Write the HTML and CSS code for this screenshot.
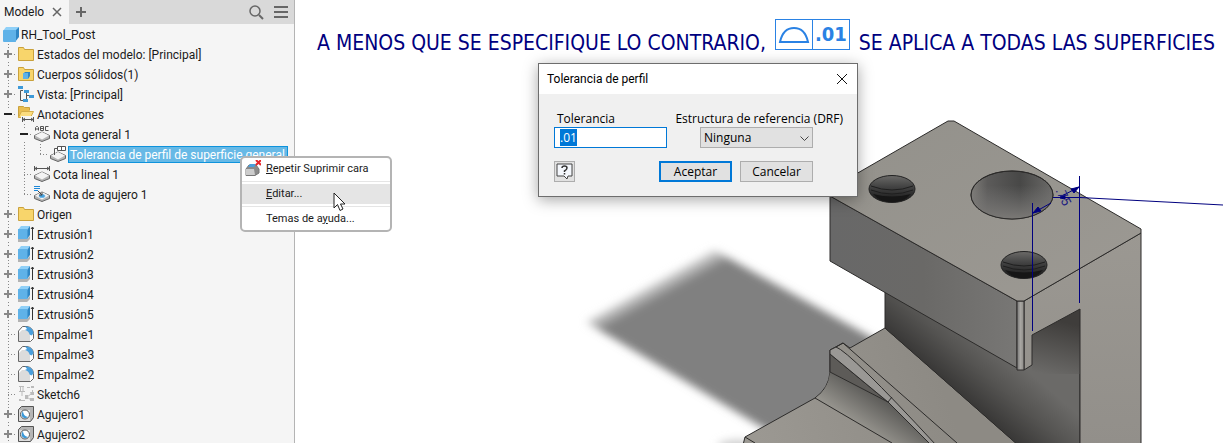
FILE: index.html
```html
<!DOCTYPE html>
<html lang="es">
<head>
    <meta charset="utf-8">
    <title>RH_Tool_Post</title>
    <link rel="stylesheet" href="styles.css">
</head>
<body>
    <!-- shared icons -->
    <svg class="sprite" aria-hidden="true">
        <symbol id="i-cube" viewBox="0 0 16 16">
            <path d="M0 5 3 1h13l-3 4z" fill="#8fd0f8"/>
            <path d="M12 5l4-4v10l-4 5z" fill="#2f86c4"/>
            <rect x="0" y="4" width="13" height="12" rx="1" fill="#5fb2e8"/>
        </symbol>
        <symbol id="i-folder" viewBox="0 0 16 16">
            <path d="M.5 1.500h5l1 2h9v11H.5z" fill="#f8d56b" stroke="#c9a13c"/>
        </symbol>
        <symbol id="i-bodies" viewBox="0 0 16 16">
            <path d="M.5 1.500h5l1 2h9v11H.5z" fill="#f8d56b" stroke="#c9a13c"/>
            <path d="M5 8l2-2h5v4l-2 3H5z" fill="#2f86c4"/>
            <rect x="5" y="7" width="5" height="6" fill="#5fb2e8"/>
        </symbol>
        <symbol id="i-view" viewBox="0 0 16 16">
            <path d="M5 4.500H2.500v10H5M8.500 7v6.500M8.500 9.500H11" fill="none" stroke="#555"/>
            <path d="M0 0h5v3H0zM6 4h5v3H6zM11 9h5v3h-5zM5 13h5v3H5z" fill="#3e9ad8"/>
        </symbol>
        <symbol id="i-annot" viewBox="0 0 16 16">
            <path d="M.5 11.500v-11h5l1 1h5v3" fill="#e9bd4f" stroke="#c9a13c"/>
            <path d="M.5 11.500l3-6h12l-3 6z" fill="#fbdc7e" stroke="#d5ae49"/>
            <path d="M3 10h13v6H3z" fill="#f5f5f5"/>
            <path d="M4.500 11v5M15.500 11v5M5 13.500h10M7 12l-2 1.500L7 15M13 12l2 1.500L13 15" fill="none" stroke="#555"/>
        </symbol>
        <symbol id="i-note" viewBox="0 0 16 16">
            <path d="M.5 9.500 8 6l7.500 3.500v3L8 15.500.5 12.500z" fill="#b5b5b5" stroke="#666"/>
            <path d="M1 9.500 8 6l7 3.500-7 4z" fill="#f4f4f4"/>
            <path d="M1.500 4.500v-3l1-1h1l1 1v3M1.500 3h3M6.500.500v4M6.500.500h3v4h-3M6.500 2.500h3M14.500.500h-3v4h3" fill="none" stroke="#555"/>
        </symbol>
        <symbol id="i-profile" viewBox="0 0 16 16">
            <path d="M.5 9.500 8 6l7.500 3.500v3L8 15.500.5 12.500z" fill="#b5b5b5" stroke="#666"/>
            <path d="M1 9.500 8 6l7 3.500-7 4z" fill="#f4f4f4"/>
            <path d="M7.500.500h8v4h-8zM11.500.500v4M7 2.500H4.500V9" fill="#fff" stroke="#555"/>
        </symbol>
        <symbol id="i-linear" viewBox="0 0 16 16">
            <path d="M.5 9.500 8 6l7.500 3.500v3L8 15.500.5 12.500z" fill="#b5b5b5" stroke="#666"/>
            <path d="M1 9.500 8 6l7 3.500-7 4z" fill="#f4f4f4"/>
            <path d="M.5 0v5M15.500 0v5M1 2.500h14M3 1 1 2.500 3 4M13 1l2 1.500L13 4" fill="none" stroke="#555"/>
        </symbol>
        <symbol id="i-holenote" viewBox="0 0 16 16">
            <path d="M.5 9.500 8 6l7.500 3.500v3L8 15.500.5 12.500z" fill="#b5b5b5" stroke="#666"/>
            <path d="M1 9.500 8 6l7 3.500-7 4z" fill="#f4f4f4"/>
            <ellipse cx="8" cy="10" rx="3" ry="1.500" fill="#3e9ad8" stroke="#6fb7e8"/>
            <path d="M0 .500h6M0 2.500h6M0 4.500h4" stroke="#1e88d8"/>
            <path d="M4 5l4 4M8 6v3H5" fill="none" stroke="#444"/>
        </symbol>
        <symbol id="i-extrude" viewBox="0 0 16 16">
            <path d="M0 13h9l3-3v3l-3 3H0z" fill="#b3b3b3"/>
            <path d="M0 4l3-4h9L9 4z" fill="#8fd0f8"/>
            <path d="M9 4l3-4v9l-3 4z" fill="#2f86c4"/>
            <path d="M0 3h9.500v10H0z" fill="#5fb2e8"/>
            <path d="M14.500 1v13M13 3l1.500-2L16 3" fill="none" stroke="#333"/>
        </symbol>
        <symbol id="i-fillet" viewBox="0 0 16 16">
            <path d="M.5 15.500V5l4-4.500H9q6 1 6.500 7v5l-3 3z" fill="#fff" stroke="#666"/>
            <path d="M1 15V7l3-3h3q5 1 5 6v5z" fill="#dcdcdc"/>
            <path d="M7 .500h2q6 1 6.500 7l-2 2-2-1Q11 5 7 4l2-1z" fill="#4a9fdc"/>
        </symbol>
        <symbol id="i-sketch" viewBox="0 0 16 16">
            <g fill="none" stroke="#bbb">
                <path d="M1 .500h5M2.500 1v4M5 1v4M1 5.500h6M4 6v4M9 1.500h3M14.500 4v2M3 14.500h4M9 11l4-3M9 11l4 3"/>
            </g>
            <path d="M13 0h3v2h-3zM12 6h4v3h-3zM7 9h3v4H7zM12 12h4v3h-4zM1 13h2v2H1z" fill="#bbb"/>
        </symbol>
        <symbol id="i-hole" viewBox="0 0 16 16">
            <path d="M.5 3.500l3-3h12v11l-3 4H.5z" fill="#b5b5b5" stroke="#555"/>
            <path d="M1 4h11v11H1z" fill="#ddd"/>
            <circle cx="7" cy="8.500" r="4.500" fill="#fff" stroke="#555"/>
            <path d="M5 5q0 5 5 6-2 2-5 .5-3-2.500 0-6.500z" fill="#3e9ad8"/>
        </symbol>
    </svg>

    <div class="app">
        <aside class="browser">
            <header class="tabs">
                <div class="tab">
                    <span>Modelo</span>
                    <button class="tool" aria-label="Cerrar"><svg width="10" height="10"><path d="M1 1l8 8M9 1 1 9" stroke="#666" stroke-width="1.500"/></svg></button>
                </div>
                <button class="tool" aria-label="Agregar"><svg width="10" height="10"><path d="M0 5h10M5 0v10" stroke="#666" stroke-width="2"/></svg></button>
                <button class="tool search" aria-label="Buscar"><svg width="15" height="15" fill="none" stroke="#666"><circle cx="6" cy="6" r="5" stroke-width="1.500"/><path d="M10 10l4 4" stroke-width="2"/></svg></button>
                <button class="tool" aria-label="Menú"><svg width="14" height="12"><path d="M0 1h14M0 6h14M0 11h14" stroke="#666" stroke-width="2"/></svg></button>
            </header>

            <div class="row root"><svg class="icon"><use href="#i-cube"/></svg><span>RH_Tool_Post</span></div>
            <ul class="tree">
                <li><div class="row"><button class="toggle plus" aria-label="Expandir"></button><svg class="icon"><use href="#i-folder"/></svg><span>Estados del modelo: [Principal]</span></div></li>
                <li><div class="row"><button class="toggle plus" aria-label="Expandir"></button><svg class="icon"><use href="#i-bodies"/></svg><span>Cuerpos sólidos(1)</span></div></li>
                <li><div class="row"><button class="toggle plus" aria-label="Expandir"></button><svg class="icon"><use href="#i-view"/></svg><span>Vista: [Principal]</span></div></li>
                <li><div class="row"><button class="toggle minus" aria-label="Contraer"></button><svg class="icon"><use href="#i-annot"/></svg><span>Anotaciones</span></div>
                    <ul>
                        <li><div class="row"><button class="toggle minus" aria-label="Contraer"></button><svg class="icon"><use href="#i-note"/></svg><span>Nota general 1</span></div>
                            <ul>
                                <li><div class="row"><i class="toggle leaf"></i><svg class="icon"><use href="#i-profile"/></svg><span class="selected">Tolerancia de perfil de superficie general</span></div></li>
                            </ul>
                        </li>
                        <li><div class="row"><i class="toggle leaf"></i><svg class="icon"><use href="#i-linear"/></svg><span>Cota lineal 1</span></div></li>
                        <li><div class="row"><i class="toggle leaf"></i><svg class="icon"><use href="#i-holenote"/></svg><span>Nota de agujero 1</span></div></li>
                    </ul>
                </li>
                <li><div class="row"><button class="toggle plus" aria-label="Expandir"></button><svg class="icon"><use href="#i-folder"/></svg><span>Origen</span></div></li>
                <li><div class="row"><button class="toggle plus" aria-label="Expandir"></button><svg class="icon"><use href="#i-extrude"/></svg><span>Extrusión1</span></div></li>
                <li><div class="row"><button class="toggle plus" aria-label="Expandir"></button><svg class="icon"><use href="#i-extrude"/></svg><span>Extrusión2</span></div></li>
                <li><div class="row"><button class="toggle plus" aria-label="Expandir"></button><svg class="icon"><use href="#i-extrude"/></svg><span>Extrusión3</span></div></li>
                <li><div class="row"><button class="toggle plus" aria-label="Expandir"></button><svg class="icon"><use href="#i-extrude"/></svg><span>Extrusión4</span></div></li>
                <li><div class="row"><button class="toggle plus" aria-label="Expandir"></button><svg class="icon"><use href="#i-extrude"/></svg><span>Extrusión5</span></div></li>
                <li><div class="row"><i class="toggle leaf"></i><svg class="icon"><use href="#i-fillet"/></svg><span>Empalme1</span></div></li>
                <li><div class="row"><i class="toggle leaf"></i><svg class="icon"><use href="#i-fillet"/></svg><span>Empalme3</span></div></li>
                <li><div class="row"><i class="toggle leaf"></i><svg class="icon"><use href="#i-fillet"/></svg><span>Empalme2</span></div></li>
                <li><div class="row"><i class="toggle leaf"></i><svg class="icon"><use href="#i-sketch"/></svg><span>Sketch6</span></div></li>
                <li><div class="row"><button class="toggle plus" aria-label="Expandir"></button><svg class="icon"><use href="#i-hole"/></svg><span>Agujero1</span></div></li>
                <li><div class="row"><button class="toggle plus" aria-label="Expandir"></button><svg class="icon"><use href="#i-hole"/></svg><span>Agujero2</span></div></li>
            </ul>
        </aside>

        <main class="viewport">
            <svg class="model" viewBox="295 0 928 443" preserveAspectRatio="xMinYMin slice">
                <defs>
                    <filter id="soft" x="-20%" y="-20%" width="140%" height="140%"><feGaussianBlur stdDeviation="4"/></filter>
                    <linearGradient id="g-shadow" gradientUnits="userSpaceOnUse" x1="648" y1="279" x2="659" y2="299"><stop offset="0" stop-color="#fff"/><stop offset="1" stop-color="#808080"/></linearGradient>
                    <linearGradient id="g-top" x1="0" y1="0" x2="1" y2="1"><stop offset="0" stop-color="#93918b"/><stop offset="1" stop-color="#9c9993"/></linearGradient>
                    <linearGradient id="g-left" x1="0" y1="0" x2="1" y2="0"><stop offset="0" stop-color="#686868"/><stop offset=".5" stop-color="#6a6967"/><stop offset="1" stop-color="#787775"/></linearGradient>
                    <linearGradient id="g-right" x1="0" y1="0" x2="0" y2="1"><stop offset="0" stop-color="#9b9892"/><stop offset="1" stop-color="#928f8a"/></linearGradient>
                    <linearGradient id="g-edge" x1="0" y1="0" x2="1" y2="0"><stop offset="0" stop-color="#777"/><stop offset=".5" stop-color="#a8a6a2"/><stop offset="1" stop-color="#8c8a86"/></linearGradient>
                    <linearGradient id="g-pocket" gradientUnits="userSpaceOnUse" x1="948" y1="382" x2="988" y2="336"><stop offset="0" stop-color="#3a3938"/><stop offset=".5" stop-color="#555452"/><stop offset="1" stop-color="#6b6a68"/></linearGradient>
                    <linearGradient id="g-wall" gradientUnits="userSpaceOnUse" x1="1056" y1="320" x2="1043" y2="374"><stop offset="0" stop-color="#3f3d3b"/><stop offset="1" stop-color="#6b6a68"/></linearGradient>
                    <linearGradient id="g-base" gradientUnits="userSpaceOnUse" x1="760" y1="443" x2="940" y2="380"><stop offset="0" stop-color="#9b9892"/><stop offset="1" stop-color="#8d8a84"/></linearGradient>
                    <linearGradient id="g-cove" gradientUnits="userSpaceOnUse" x1="862" y1="387" x2="844" y2="414"><stop offset="0" stop-color="#5e5d5a"/><stop offset="1" stop-color="#94928c"/></linearGradient>
                    <linearGradient id="g-bore" x1="0" y1="0" x2="1" y2="0"><stop offset="0" stop-color="#807e7a"/><stop offset=".2" stop-color="#5c5b5a"/><stop offset=".6" stop-color="#484847"/><stop offset="1" stop-color="#6b6a68"/></linearGradient>
                    <linearGradient id="g-bore-low" x1="0" y1="0" x2="0" y2="1"><stop offset=".3" stop-color="#777" stop-opacity="0"/><stop offset="1" stop-color="#7b7976"/></linearGradient>
                    <linearGradient id="g-thread" x1="0" y1="0" x2="0" y2="1"><stop offset="0" stop-color="#6b6a68"/><stop offset=".4" stop-color="#444"/><stop offset="1" stop-color="#151515"/></linearGradient>
                    <symbol id="tap" viewBox="0 0 48 30">
                        <ellipse cx="24" cy="15" rx="23" ry="13.500" fill="url(#g-thread)" stroke="#222"/>
                        <path d="M3 12q21 8 42 0M3 16q21 8 42 0" fill="none" stroke="#1f1f1f"/>
                        <path d="M5 20q19 5 38 0-7 8-19 8T5 20z" fill="#161616"/>
                    </symbol>
                </defs>

                <!-- ground shadow -->
                <g filter="url(#soft)">
                    <path d="M586 322 714 250 905 356 850 440 770 432z" fill="url(#g-shadow)"/>
                    <ellipse cx="738" cy="446" rx="20" ry="6" fill="#ccc"/>
                </g>

                <g stroke-linejoin="round" stroke="#2c2b2a">
                    <!-- base -->
                    <path d="M885 328 850 348 843 343 830 350V372Q829 388 815 398L745 437 743 445H1018L885 328z" fill="url(#g-base)"/>
                    <path d="M830 372 888 402 931 445H894L816 398Q829 388 830 372z" fill="url(#g-cove)" stroke="none"/>
                    <path d="M830 354 888 402 830 372z" fill="#5d5b58"/>
                    <path d="M830 350 836 347Q850 352 936 445H931L888 402 830 354z" fill="#9a9895"/>
                    <path d="M836 347 843 343 957 443M888 402l4-5M815 398 892 443M745 437l10 6" fill="none"/>
                    <!-- pocket -->
                    <path d="M885 290V328L1018 445H1080V300z" fill="url(#g-pocket)"/>
                    <path d="M1032 335 1080 309V374H1032z" fill="url(#g-wall)" stroke="none"/>
                    <!-- head -->
                    <path d="M1024 301 1141 233V445H1080V309L1032 335V365L1024 370z" fill="url(#g-right)"/>
                    <path d="M830 196V261L1017 368V301z" fill="url(#g-left)"/>
                    <path d="M1017 301h7v69h-7z" fill="url(#g-edge)"/>
                    <path d="M948 121h6L1141 229V233L1024 301h-7L830 196V189z" fill="url(#g-top)"/>
                    <ellipse cx="1012" cy="195" rx="41" ry="24" fill="url(#g-bore)"/>
                    <ellipse cx="1012" cy="195" rx="41" ry="24" fill="url(#g-bore-low)"/>
                </g>
                <use href="#tap" x="868" y="174" width="48" height="30"/>
                <use href="#tap" x="1000" y="250" width="48" height="30"/>

                <!-- dimensions -->
                <g fill="none" stroke="#00007f">
                    <path d="M1032.500 203V331M1079.500 176V303M1033 213l18-10M1060 197l19-10M1053 197.500H1080L1223 205"/>
                    <path d="M1033 213l5-6 3 4zM1079 187l-8 2 3 4zM1060 198l5-4v5z" fill="#00007f"/>
                </g>
                <text class="dim" x="1047" y="194" transform="rotate(64 1054 199)">.75</text>
            </svg>

            <div class="note">
                <span>A MENOS QUE SE ESPECIFIQUE LO CONTRARIO,</span>
                <span class="frame">
                    <svg width="36" height="29"><path d="M4 22h28Q29 8 18 8T4 22z" fill="none" stroke="#2a82e4" stroke-width="2"/></svg>
                    <b>.01</b>
                </span>
                <span>SE APLICA A TODAS LAS SUPERFICIES</span>
            </div>

            <form class="dialog">
                <div class="titlebar">
                    <span>Tolerancia de perfil</span>
                    <button type="button" class="tool" aria-label="Cerrar"><svg width="12" height="12"><path d="M1 1l10 10M11 1 1 11" stroke="#111"/></svg></button>
                </div>
                <div class="fields">
                    <div class="field">
                        <label for="tol">Tolerancia</label>
                        <input id="tol" type="text" value=".01">
                    </div>
                    <div class="field right">
                        <label for="drf">Estructura de referencia (DRF)</label>
                        <div class="drop">
                            <select id="drf"><option>Ninguna</option></select>
                            <svg class="chevron" width="9" height="6"><path d="M.5.500l4 4 4-4" fill="none" stroke="#444"/></svg>
                        </div>
                    </div>
                </div>
                <div class="actions">
                    <button type="button" class="help" aria-label="Ayuda"><svg width="17" height="17"><path d="M1 1h15v12h-4l-1 3-3-3H1z" fill="#f4f7fc" stroke="#444"/><path d="M6 5q0-2 2.500-2T11 5q0 1.500-2.500 3v1M8.500 10v1.500" fill="none" stroke="#333" stroke-width="1.500"/></svg></button>
                    <button type="button" class="btn primary">Aceptar</button>
                    <button type="button" class="btn">Cancelar</button>
                </div>
            </form>
        </main>

        <div class="menu">
            <button><svg class="icon" viewBox="0 0 16 16"><path d="M1 9l3-4h7l3 4v4l-4 2.500H1z" fill="#8a8a8a" stroke="#777"/><path d="M1 9h8l1 6H1z" fill="#ccc"/><path d="M3 7l2-3h6L9 7z" fill="#4a9fdc"/><path d="M11 0l5 5M16 0l-5 5" stroke="#e8252b" stroke-width="2"/></svg><span><u>R</u>epetir Suprimir cara</span></button>
            <button class="active"><span><u>E</u>ditar...</span></button>
            <button><span>Temas de a<u>y</u>uda...</span></button>
        </div>
        <svg class="cursor" width="13" height="20"><path d="M1 1v15l3.500-3.500L7 18.500l3-1.500-2.500-5H12z" fill="#fff" stroke="#222"/></svg>
    </div>
    <script>
        document.getElementById('tol').select();
    </script>
</body>
</html>
```
FILE: styles.css
```css
body {
    margin: 0;
    font-family: Roboto, "Noto Sans", sans-serif;
    font-size: 12px;
    color: #1a1a1a;
    background: #fff;
}
button, input, select {
    font: inherit;
    color: inherit;
}
.sprite {
    display: none;
}
.app {
    position: relative;
    display: flex;
    height: 100vh;
    overflow: hidden;
}

/* model browser */
.browser {
    flex: none;
    width: 294px;
    border-right: 1px solid #b4b4b4;
    background: #f5f5f5;
}
.tabs {
    display: flex;
    align-items: center;
    height: 24px;
    padding-right: 6px;
    gap: 10px;
    background: #d9d9d9;
}
.tab {
    display: flex;
    align-items: center;
    gap: 8px;
    height: 24px;
    padding: 0 7px 0 4px;
    margin-right: -3px;
    background: #f5f5f5;
}
.tool {
    display: flex;
    padding: 0;
    border: 0;
    background: none;
}
.search {
    margin-left: auto;
}
.row {
    display: flex;
    align-items: center;
    height: 20px;
    white-space: nowrap;
}
.row span {
    padding-top: 2px;
}
.root {
    padding-left: 3px;
}
.icon {
    flex: none;
    width: 16px;
    height: 16px;
    margin-right: 3px;
}
.root .icon {
    margin-right: 2px;
}
.browser ul {
    position: relative;
    margin: 0;
    padding: 0;
    list-style: none;
}
.browser ul ul {
    padding-left: 16px;
}
.browser ul::before {
    content: "";
    position: absolute;
    top: 0;
    bottom: 10px;
    left: 8px;
    width: 1px;
    background: repeating-linear-gradient(#888 0 1px, transparent 1px 3px);
}
.browser ul ul::before {
    left: 24px;
}
.browser .tree::before {
    bottom: 0;
}
.toggle {
    position: relative;
    flex: none;
    width: 18px;
    height: 12px;
    padding: 0;
    border: 0;
    background: none;
}
.toggle::after {
    content: "";
    position: absolute;
    top: 6px;
    left: 14px;
    right: 1px;
    height: 1px;
    background: repeating-linear-gradient(90deg, #888 0 1px, transparent 1px 3px);
}
.leaf::after {
    left: 8px;
}
.plus {
    background:
        linear-gradient(#888, #888) 4px 5px / 8px 2px no-repeat,
        linear-gradient(#888, #888) 7px 2px / 2px 8px no-repeat,
        linear-gradient(#f5f5f5, #f5f5f5) 3px 0 / 10px 12px no-repeat;
}
.minus {
    background:
        linear-gradient(#222, #222) 4px 5px / 8px 2px no-repeat,
        linear-gradient(#f5f5f5, #f5f5f5) 3px 0 / 10px 12px no-repeat;
}
.row .selected {
    box-sizing: border-box;
    height: 17px;
    margin-left: -1px;
    padding: 0 2px 0 1px;
    border: 1px solid #0e93dc;
    background: #67b9e6;
    color: #fff;
    line-height: 16px;
}

/* graphics window */
.viewport {
    position: relative;
    flex: 1;
    min-width: 0;
}
.model {
    position: absolute;
    inset: 0;
    width: 100%;
    height: 100%;
}
.dim {
    fill: #1c1c80;
    font-size: 13px;
}
.note {
    position: relative;
    display: flex;
    align-items: flex-start;
    gap: 9px;
    padding: 19px 0 0 22px;
    color: #00007f;
    font-family: "DejaVu Sans Condensed", "Noto Sans", sans-serif;
    font-size: 21px;
    line-height: 32px;
    white-space: nowrap;
}
.note span {
    padding-top: 8px;
}
.note .frame {
    display: flex;
    padding: 0;
    border: 1px solid #2a82e4;
    color: #2a82e4;
    font-size: 20px;
    line-height: 29px;
}
.frame b {
    padding: 0 2px;
    border-left: 1px solid #2a82e4;
}

/* tolerance dialog */
.dialog {
    position: absolute;
    top: 63px;
    left: 243px;
    box-sizing: border-box;
    width: 320px;
    border: 1px solid #6d6d6d;
    background: #f0f0f0;
    color: #000;
    box-shadow: 0 3px 14px rgba(0, 0, 0, 0.35);
}
.titlebar {
    display: flex;
    align-items: center;
    justify-content: space-between;
    height: 30px;
    padding: 0 9px 0 8px;
    background: #fff;
}
.fields {
    display: flex;
    justify-content: space-between;
    padding: 16px 14px 0 15px;
    font-family: "Open Sans", "Noto Sans", sans-serif;
}
.field {
    display: flex;
    flex-direction: column;
}
.field label {
    line-height: 17px;
    padding-left: 3px;
}
.field input, .field select {
    box-sizing: border-box;
    width: 113px;
    height: 21px;
    border: 1px solid #0078d7;
    border-radius: 0;
    outline: 0;
    padding: 0 5px;
    background: #fff;
}
.field input::selection {
    background: #0078d7;
    color: #fff;
}
.right {
    align-items: flex-end;
}
.drop {
    position: relative;
    display: flex;
    margin-right: 30px;
}
.drop select {
    padding: 0 3px;
    border-color: #adadad;
    appearance: none;
    background: #e1e1e1;
}
.chevron {
    position: absolute;
    top: 9px;
    right: 4px;
    pointer-events: none;
}
.actions {
    display: flex;
    gap: 8px;
    padding: 13px 44px 14px 15px;
    font-family: "Open Sans", "Noto Sans", sans-serif;
}
.btn, .help {
    box-sizing: border-box;
    width: 73px;
    height: 21px;
    padding: 0;
    border: 1px solid #adadad;
    background: #e1e1e1;
}
.help {
    display: flex;
    align-items: center;
    justify-content: center;
    width: 21px;
    margin-right: auto;
}
.primary {
    border: 2px solid #0078d7;
}

/* context menu */
.menu {
    position: absolute;
    top: 156px;
    left: 240px;
    box-sizing: border-box;
    width: 152px;
    border: 2px solid #b4b4b4;
    border-radius: 5px;
    background: #fff;
}
.menu button {
    display: flex;
    align-items: center;
    width: 100%;
    height: 22px;
    padding: 0 0 2px 24px;
    border: 0;
    background: none;
    font-size: 11px;
}
.menu .icon {
    margin: 0 5px 0 -21px;
}
.menu .active {
    height: 20px;
    margin: 4px 0;
    background: #e5e5e5;
    box-shadow: 0 -2px #fff, 0 -3px #e5e5e5, 0 2px #fff, 0 3px #e5e5e5;
}
.cursor {
    position: absolute;
    top: 192px;
    left: 333px;
}
```
